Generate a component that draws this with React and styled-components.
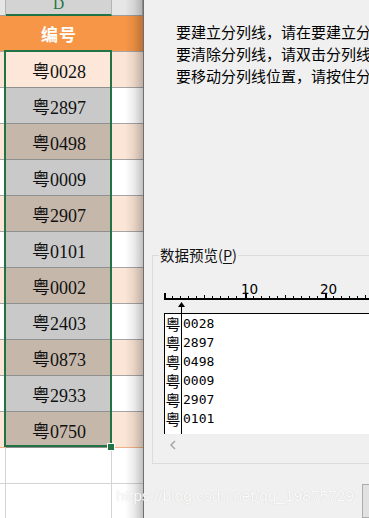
import React from 'react'
import styled, { createGlobalStyle } from 'styled-components'

const GlobalStyle = createGlobalStyle`
  html, body {
    margin: 0;
    padding: 0;
    overflow: hidden;
    background: #fff;
  }
  * {
    box-sizing: border-box;
  }
`

const codes = ['0028', '2897', '0498', '0009', '2907', '0101', '0002', '2403', '0873', '2933', '0750']
const previewCodes = codes.slice(0, 6)

// tone of the D cells: first one peach, then grey / brown alternating
const toneOf = i => (i === 0 ? 'peach' : i % 2 === 1 ? 'grey' : 'brown')
const tones = {
  peach: '#fce7d8',
  grey: '#c9c9c9',
  brown: '#c5b7aa',
}

const RulerMark = () => {
  const ticks = []
  for (let i = 0; i <= 27; i++) {
    const x = Math.round(i * 8.05)
    const major = i % 10 === 0
    const mid = i % 5 === 0
    const h = major ? 5 : mid ? 3 : 2
    ticks.push(
      <rect key={i} x={x} y={34 - h} width={major ? 2 : 1} height={h} fill="#000" />
    )
  }
  return (
    <RulerSvg width="230" height="49" viewBox="0 0 230 49">
      <text x="77" y="29.5" fontSize="13.5" fontFamily="DejaVu Sans, sans-serif" fill="#000">
        10
      </text>
      <text x="156" y="29.5" fontSize="13.5" fontFamily="DejaVu Sans, sans-serif" fill="#000">
        20
      </text>
      {ticks}
      <rect x="0" y="34" width="230" height="2" fill="#000" />
      <polygon points="17.5,38 14,43 21,43" fill="#000" />
      <line x1="17.5" y1="43" x2="17.5" y2="49" stroke="#000" strokeWidth="1" />
    </RulerSvg>
  )
}

const Chevron = () => (
  <svg width="8" height="10" viewBox="0 0 8 10">
    <polyline points="6,1 2,5 6,9" fill="none" stroke="#a6a6a6" strokeWidth="1.5" />
  </svg>
)

const App = () => {
  return (
    <>
      <GlobalStyle />
      <Screen>
        <Sheet>
          <ColHead />
          <ColHead $selected>D</ColHead>
          <ColHead />

          <TitleCell />
          <TitleCell $main>编号</TitleCell>
          <TitleCell />

          {codes.map((code, i) => (
            <React.Fragment key={code}>
              <SideCell $band={i % 2 === 0} $last={i === codes.length - 1} />
              <CodeCell $tone={toneOf(i)}>粤{code}</CodeCell>
              <SideCell $band={i % 2 === 0} $last={i === codes.length - 1} />
            </React.Fragment>
          ))}

          {[0, 1].map(r => (
            <React.Fragment key={r}>
              <EmptyCell $line />
              <EmptyCell $line />
              <EmptyCell />
            </React.Fragment>
          ))}

          <Selection />
          <FillHandle />
        </Sheet>

        <Dialog>
          <Instructions>
            <div>要建立分列线，请在要建立分列线处单击鼠标。</div>
            <div>要清除分列线，请双击分列线。</div>
            <div>要移动分列线位置，请按住分列线并将其拖至指定位置。</div>
          </Instructions>

          <GroupBox>
            <GroupLabel>
              数据预览(<u>P</u>)
            </GroupLabel>
            <RulerMark />
            <PreviewBox>
              <MarkColumn>
                {previewCodes.map(code => (
                  <MarkGlyph key={code}>粤</MarkGlyph>
                ))}
              </MarkColumn>
              <CodeColumn>
                {previewCodes.map(code => (
                  <PreviewCode key={code}>{code}</PreviewCode>
                ))}
              </CodeColumn>
            </PreviewBox>
            <ScrollRow>
              <Chevron />
            </ScrollRow>
          </GroupBox>

          <Footer>
            <DialogButton />
          </Footer>
        </Dialog>

        <Watermark>https://blog.csdn.net/qq_19875729</Watermark>
      </Screen>
    </>
  )
}

const Screen = styled.div`
  position: relative;
  display: flex;
  width: 369px;
  height: 518px;
  overflow: hidden;
`

const Sheet = styled.div`
  position: relative;
  flex: none;
  width: 143px;
  display: grid;
  grid-template-columns: 6px 106px 31px;
  grid-template-rows: 16px 36px;
  grid-auto-rows: 36px;
  background: #fff;
  font-family: 'Liberation Serif', 'Noto Sans CJK SC', serif;

  /* drop shadow cast by the dialog window */
  &::after {
    content: '';
    position: absolute;
    top: 0;
    right: 0;
    bottom: 0;
    width: 18px;
    background: linear-gradient(to right, rgba(0, 0, 0, 0), rgba(0, 0, 0, 0.08) 50%, rgba(0, 0, 0, 0.24));
    pointer-events: none;
  }
`

const ColHead = styled.div`
  background: ${p => (p.$selected ? '#d3d3d3' : '#e6e6e6')};
  border-bottom: ${p => (p.$selected ? '2px solid #217346' : '1px solid #9e9e9e')};
  border-right: 1px solid #b4b4b4;
  color: #217346;
  font-size: 15.5px;
  line-height: 8px;
  text-align: center;
  overflow: hidden;
`

const TitleCell = styled.div`
  background: #f79646;
  border-bottom: 1px solid #a6a6a6;
  display: flex;
  align-items: center;
  justify-content: center;
  color: #fff;
  font-family: 'Noto Sans CJK SC', sans-serif;
  font-weight: 700;
  font-size: 17px;
  letter-spacing: 1px;
`

const SideCell = styled.div`
  background: ${p => (p.$band ? '#fbe5d6' : '#fff')};
  border-bottom: 1px solid ${p => (p.$last ? '#f4b183' : '#a6a6a6')};
`

const CodeCell = styled.div`
  background: ${p => tones[p.$tone]};
  border-bottom: 1px solid #8f8f8f;
  display: flex;
  align-items: center;
  justify-content: center;
  font-size: 18px;
  color: #111;
`

const EmptyCell = styled.div`
  border-bottom: 1px solid #d4d4d4;
  border-right: ${p => (p.$line ? '1px solid #d4d4d4' : 'none')};
`

const Selection = styled.div`
  position: absolute;
  left: 4px;
  top: 50px;
  width: 108px;
  height: 397px;
  border: 2px solid #217346;
  pointer-events: none;
`

const FillHandle = styled.div`
  position: absolute;
  left: 107px;
  top: 443px;
  width: 8px;
  height: 8px;
  background: #217346;
  border: 1px solid #fff;
`

const Dialog = styled.div`
  position: relative;
  z-index: 1;
  flex: 1;
  min-width: 0;
  background: #f0f0f0;
  border-left: 1px solid #6e6e6e;
  overflow: hidden;
  font-family: 'Noto Sans CJK SC', sans-serif;
  color: #000;
`

const Instructions = styled.div`
  padding: 21px 0 0 32px;
  font-size: 15px;
  line-height: 22px;
  white-space: nowrap;
`

const GroupBox = styled.fieldset`
  margin: 159px 0 0 8px;
  width: 260px;
  min-width: 0;
  padding: 0 0 7px 11px;
  border: 1px solid #dcdcdc;
`

const GroupLabel = styled.legend`
  margin-left: -5px;
  padding: 0 1px;
  font-size: 14.5px;
  line-height: 18px;
  color: #111;
  u {
    text-decoration-thickness: 1px;
    text-underline-offset: 2px;
  }
`

const RulerSvg = styled.svg`
  display: block;
`

const PreviewBox = styled.div`
  display: flex;
  height: 121px;
  background: #fff;
  border-top: 1px solid #000;
  border-left: 1px solid #000;
`

const MarkColumn = styled.div`
  width: 17px;
  flex: none;
  border-right: 1px solid #000;
`

const MarkGlyph = styled.div`
  height: 19px;
  font-size: 15px;
  line-height: 19px;
  text-align: center;
`

const CodeColumn = styled.div`
  padding-left: 1px;
  font-family: 'DejaVu Sans Mono', monospace;
  font-size: 13px;
`

const PreviewCode = styled.div`
  height: 19px;
  line-height: 19px;
`

const ScrollRow = styled.div`
  height: 22px;
  display: flex;
  align-items: center;
  padding-left: 5px;
`

const Footer = styled.div`
  margin-top: 20px;
  padding-left: 218px;
`

const DialogButton = styled.div`
  width: 80px;
  height: 34px;
  background: #e1e1e1;
  border: 1px solid #adadad;
`

const Watermark = styled.div`
  position: absolute;
  left: 116px;
  top: 487px;
  z-index: 2;
  font-family: 'Liberation Sans', sans-serif;
  font-size: 15.5px;
  color: rgba(255, 255, 255, 0.95);
  text-shadow: 0 0 1px rgba(0, 0, 0, 0.18);
  white-space: nowrap;
  pointer-events: none;
`

export default App
